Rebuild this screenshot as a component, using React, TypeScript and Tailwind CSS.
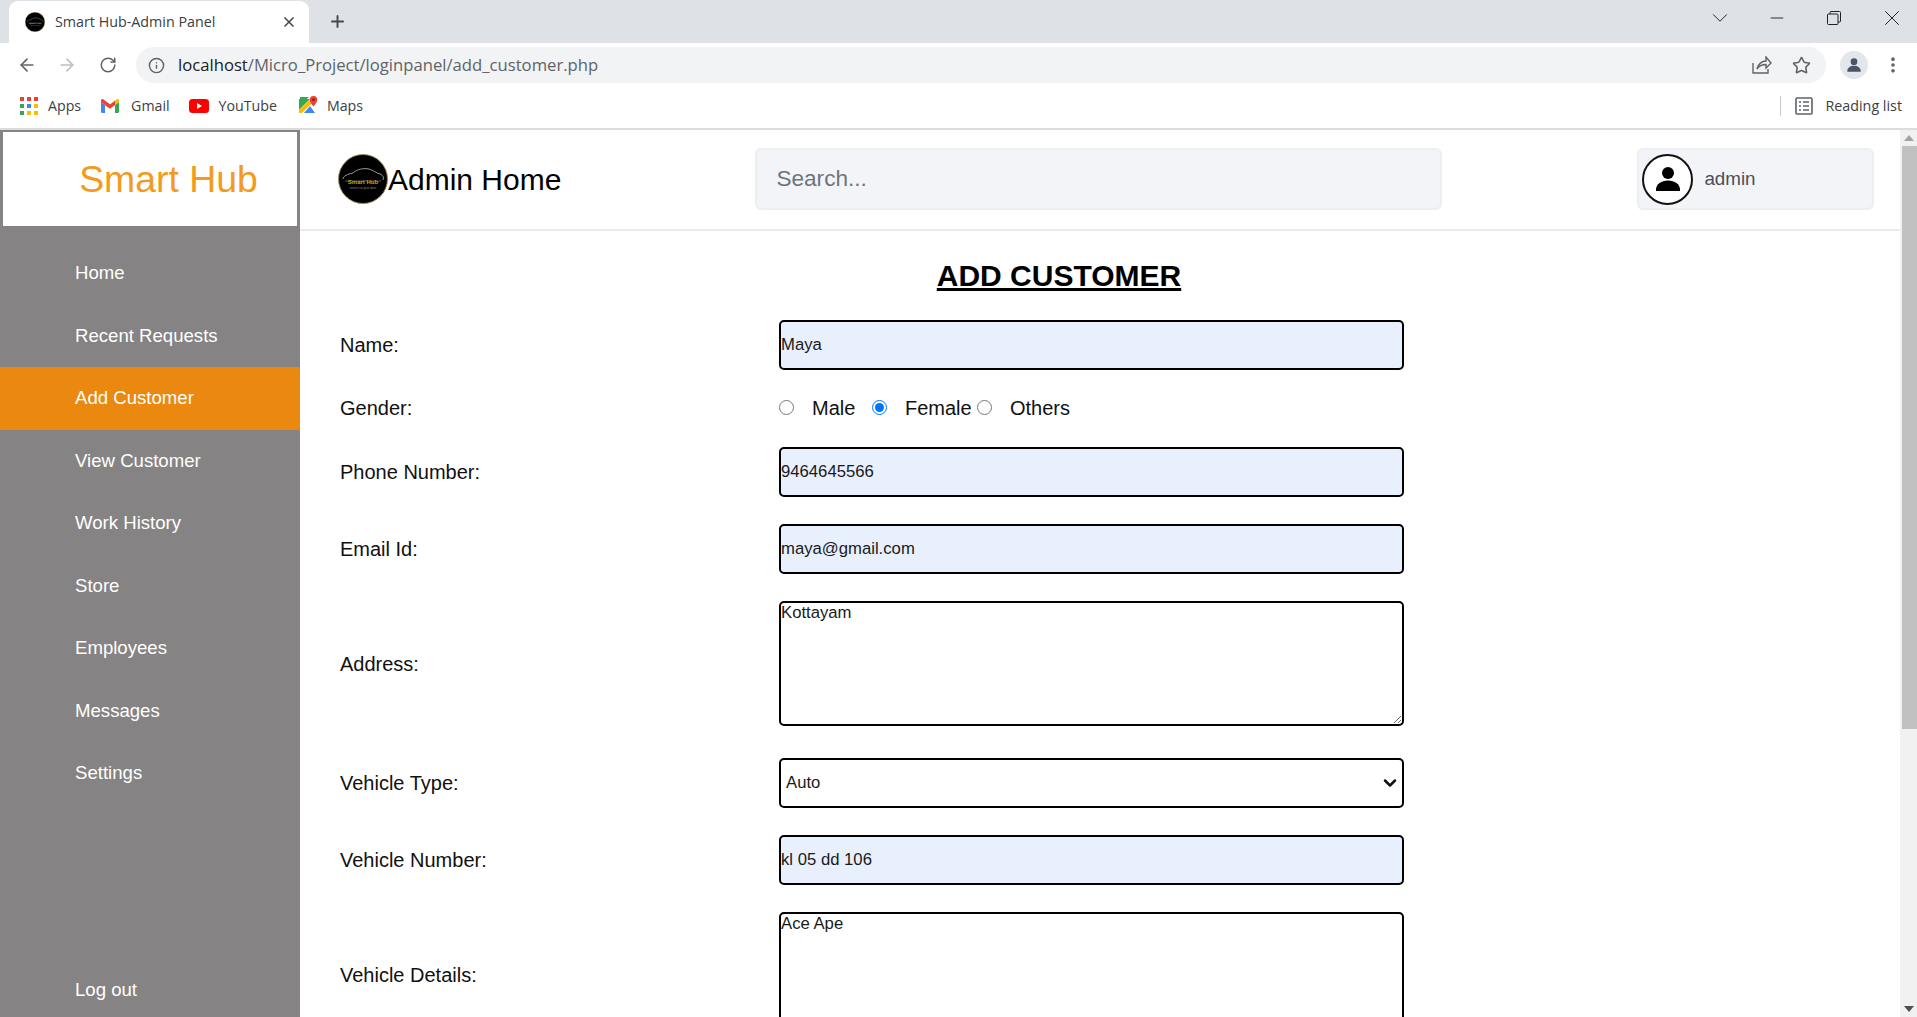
import React from "react";
import { ArrowLeft, ArrowRight, RotateCw, Info, Star, Plus, X, ChevronDown, Minus, EllipsisVertical } from "lucide-react";

const ui = "font-['Open_Sans','Noto_Sans',sans-serif]";
const page = "font-['Liberation_Sans',Arial,sans-serif]";

function Logo({ size }: { size: number }) {
  return (
    <svg width={size} height={size} viewBox="0 0 50 50" className="shrink-0">
      <circle cx="25" cy="25" r="24.500" fill="#000" stroke="#9b8b63" strokeWidth="1" />
      <path d="M5 25c0-3 5-5 10-6 4-4 11-5 16-4 4 1 7 4 11 5 3 1 4 3 3 6" fill="none" stroke="#9a9a9a" strokeWidth="1" />
      <path d="M7 27h36" stroke="#6f6f6f" strokeWidth="0.800" />
      <text x="25" y="30" textAnchor="middle" fontSize="6" fontWeight="700" fill="#c9a20c" fontFamily="Liberation Sans, sans-serif">Smart Hub</text>
      <text x="25" y="35" textAnchor="middle" fontSize="3" fill="#8a8a8a" fontFamily="Liberation Sans, sans-serif">service at your door</text>
    </svg>
  );
}

function Person({ className }: { className?: string }) {
  return (
    <svg viewBox="0 0 24 24" className={className} fill="currentColor">
      <circle cx="12" cy="8" r="4" />
      <path d="M4 20v-1c0-3.500 3.600-6 8-6s8 2.500 8 6v1z" />
    </svg>
  );
}

function AppsIcon() {
  const c = ["#ea4335", "#ea4335", "#ea4335", "#34a853", "#4285f4", "#fbbc04", "#34a853", "#fbbc04", "#fbbc04"];
  return (
    <div className="grid grid-cols-[4px_4px_4px] gap-[3px]">
      {c.map((x, i) => (
        <span key={i} className="size-[4px]" style={{ background: x }} />
      ))}
    </div>
  );
}

function GmailIcon() {
  return (
    <svg width="18" height="14" viewBox="0 0 18 14">
      <path d="M0 3v9.500A1.500 1.500 0 0 0 1.500 14H4V6z" fill="#4285f4" />
      <path d="M18 3v9.500a1.500 1.500 0 0 1-1.500 1.500H14V6z" fill="#34a853" />
      <path d="M4 6 0 3V1.500C0 .2 1.500-.4 2.500.4L9 5.500l-2 3z" fill="#ea4335" />
      <path d="M14 6l4-3V1.500C18 .2 16.500-.4 15.500.4L9 5.500V8.500z" fill="#fbbc04" />
      <path d="M4 1.800 9 5.500l5-3.700V6L9 9.800 4 6z" fill="#ea4335" />
    </svg>
  );
}

function YouTubeIcon() {
  return (
    <svg width="20" height="14" viewBox="0 0 20 14">
      <rect width="20" height="14" rx="3.500" fill="#f00" />
      <path d="M8 4l5 3-5 3z" fill="#fff" />
    </svg>
  );
}

function MapsIcon() {
  return (
    <svg width="19" height="19" viewBox="0 0 19 19">
      <path d="M0 3h11L0 14z" fill="#34a853" />
      <path d="M0 14 11 3l3 3L3 17H0z" fill="#fbbc04" />
      <path d="M5 17 11 10l5 7z" fill="#4285f4" />
      <path d="M1 1h9L1 9z" fill="#34a853" />
      <path d="M14.500 0a3.800 3.800 0 0 0-3.800 3.800c0 2.700 3.800 6.700 3.800 6.700s3.800-4 3.800-6.700A3.800 3.800 0 0 0 14.500 0z" fill="#ea4335" />
      <circle cx="14.500" cy="3.800" r="1.300" fill="#7d1f16" />
    </svg>
  );
}

function Bookmark({ icon, label, className }: { icon: React.ReactNode; label: string; className: string }) {
  return (
    <div className={`flex items-center ${className}`}>
      {icon}
      <span className="text-[14.200px] text-[#3c4043]">{label}</span>
    </div>
  );
}

function BrowserChrome() {
  return (
    <div className={`${ui} shrink-0`}>
      <div className="flex h-[43px] bg-[#dee1e6]">
        <div className="ml-[9px] mt-[1px] flex h-[42px] w-[300px] items-center rounded-t-[9px] bg-white pl-[16px] pr-[12px]">
          <Logo size={20} />
          <span className="ml-[10px] flex-1 text-[14.300px] text-[#3c4043]">Smart Hub-Admin Panel</span>
          <X size={16} strokeWidth={2.500} className="text-[#45484c]" />
        </div>
        <Plus size={19} strokeWidth={2.400} className="ml-[19px] mt-[12px] text-[#45484c]" />
        <div className="ml-auto flex items-center pb-[7px] text-[#202124]">
          <ChevronDown size={26} strokeWidth={0.900} />
          <Minus size={20} strokeWidth={1.100} className="ml-[34px]" />
          <svg width="14" height="14" viewBox="0 0 14 14" fill="none" stroke="#202124" className="ml-[40px]">
            <rect x="0.500" y="3" width="10.500" height="10.500" rx="1" />
            <path d="M3 3V1.500a1 1 0 0 1 1-1h8.500a1 1 0 0 1 1 1V10a1 1 0 0 1-1 1H11" />
          </svg>
          <X size={26} strokeWidth={0.900} className="ml-[38px] mr-[12px]" />
        </div>
      </div>
      <div className="flex h-[44px] items-center bg-white">
        <ArrowLeft size={20} strokeWidth={2} className="ml-[17px] text-[#5f6368]" />
        <ArrowRight size={20} strokeWidth={2} className="ml-[20px] text-[#bcbfc3]" />
        <RotateCw size={18} strokeWidth={2} className="ml-[22px] text-[#5f6368]" />
        <div className="ml-[19px] flex h-[36px] w-[1690px] items-center rounded-full bg-[#f1f3f4] pl-[12px]">
          <Info size={17} strokeWidth={2} className="text-[#5f6368]" />
          <span className="ml-[13px] text-[16.670px] leading-none text-[#5f6368]">
            <span className="text-[#202124]">localhost</span>/Micro_Project/loginpanel/add_customer.php
          </span>
          <svg width="20" height="18" viewBox="0 0 20 18" fill="none" stroke="#5f6368" strokeWidth="1.400" className="ml-auto">
            <path d="M1 7v10h15v-4M5 13c1-5 5-8 9-8V1l5 6-5 5V8.500c-4 0-7 1.500-9 4.500z" />
          </svg>
          <Star size={19} strokeWidth={2} className="ml-[20px] mr-[15px] text-[#5f6368]" />
        </div>
        <div className="ml-[14px] flex size-[28px] items-center justify-center rounded-full bg-[#e3e6eb] text-[#4a5568]">
          <Person className="size-[20px]" />
        </div>
        <EllipsisVertical size={20} strokeWidth={2.400} className="ml-[15px] text-[#5f6368]" />
      </div>
      <div className="flex h-[43px] items-center border-b-[2px] border-[#dadce0] bg-white pb-[3px]">
        <Bookmark className="ml-[20px] gap-[10px]" icon={<AppsIcon />} label="Apps" />
        <Bookmark className="ml-[20px] gap-[12px]" icon={<GmailIcon />} label="Gmail" />
        <Bookmark className="ml-[19px] gap-[10px]" icon={<YouTubeIcon />} label="YouTube" />
        <Bookmark className="ml-[22px] gap-[9px]" icon={<MapsIcon />} label="Maps" />
        <div className="ml-auto flex items-center">
          <div className="h-[20px] w-px bg-[#c4c7cb]" />
          <svg width="18" height="18" viewBox="0 0 18 18" fill="none" stroke="#5f6368" strokeWidth="1.600" className="ml-[14px]">
            <rect x="1" y="1" width="16" height="16" rx="1" />
            <path d="M4 5h2M8 5h6M4 9h2M8 9h6M4 13h2M8 13h6" />
          </svg>
          <span className="ml-[12px] mr-[15px] text-[14.300px] text-[#3c4043]">Reading list</span>
        </div>
      </div>
    </div>
  );
}

const menu = ["Home", "Recent Requests", "Add Customer", "View Customer", "Work History", "Store", "Employees", "Messages", "Settings"];

function Sidebar() {
  return (
    <aside className="flex h-[887px] w-[300px] shrink-0 flex-col bg-[#858383] px-0 pt-[2px] text-white">
      <div className="mx-[3px] flex h-[94px] items-center justify-center bg-white pl-[37px] text-[37.400px] text-[#f39a21]">
        Smart Hub
      </div>
      <nav className="pt-[16px]">
        {menu.map((m) => (
          <div
            key={m}
            className={`flex h-[62.500px] items-center pl-[75px] text-[18.600px] ${m === "Add Customer" ? "bg-[#ea880f]" : ""}`}
          >
            {m}
          </div>
        ))}
      </nav>
      <div className="mt-auto mb-[13px] pl-[75px] text-[18.600px]">Log out</div>
    </aside>
  );
}

function TopBar() {
  return (
    <header className="flex h-[101px] items-center border-b-[2px] border-[#e9ecef] pb-[1px] pl-[38px]">
      <Logo size={50} />
      <span className="text-[30px] text-black">Admin Home</span>
      <div className="ml-[194px] flex h-[62px] w-[687px] items-center rounded-[6px] border-[2px] border-[#eceef2] bg-[#f3f4f8] pl-[19px] text-[22.600px] text-[#6c757d]">
        Search...
      </div>
      <div className="ml-[195px] flex h-[62px] w-[237px] items-center rounded-[6px] border-[2px] border-[#eceef2] bg-[#f3f4f8] pl-[3px] text-[18.800px] text-[#495057]">
        <div className="flex size-[51px] items-center justify-center rounded-full border-[2px] border-[#111] bg-white text-black">
          <Person className="size-[36px]" />
        </div>
        <span className="ml-[11px]">admin</span>
      </div>
    </header>
  );
}

const field =
  "block w-[625px] rounded-[5px] border-[2.500px] border-black pl-[0px] text-[16.700px] text-[#1a1a1a] outline-none";

function Row({ label, children, className }: { label: string; children: React.ReactNode; className?: string }) {
  return (
    <div className={`grid grid-cols-[439px_625px] items-center ${className ?? ""}`}>
      <label className="text-[20px] text-[#111]">{label}</label>
      {children}
    </div>
  );
}

function Text({ value }: { value: string }) {
  return <input readOnly value={value} className={`${field} h-[50px] bg-[#e8f0fe]`} />;
}

function Area({ value, height }: { value: string; height: string }) {
  return <textarea readOnly value={value} className={`${field} ${height} bg-white leading-[19px] resize`} />;
}

function Radio({ label, checked, className }: { label: string; checked?: boolean; className: string }) {
  return (
    <label className={`flex items-center text-[20px] text-[#111] ${className}`}>
      <input type="radio" name="gender" readOnly checked={!!checked} className="m-0 size-[15px] -translate-y-[1px]" />
      <span className="ml-[18px]">{label}</span>
    </label>
  );
}

function Form() {
  return (
    <div className="pl-[40px]">
      <h1 className="pt-[27px] pr-[122px] text-center text-[30px] font-bold leading-[36px] text-black underline">ADD CUSTOMER</h1>
      <div className="mt-[26px] flex flex-col gap-[27px]">
        <Row label="Name:">
          <Text value="Maya" />
        </Row>
        <Row label="Gender:" className="-mt-[4px] mb-[5px] h-[22px]">
          <div className="flex items-center">
            <Radio label="Male" className="w-[93px]" />
            <Radio label="Female" checked className="w-[105px]" />
            <Radio label="Others" className="" />
          </div>
        </Row>
        <Row label="Phone Number:">
          <Text value="9464645566" />
        </Row>
        <Row label="Email Id:">
          <Text value="maya@gmail.com" />
        </Row>
        <Row label="Address:">
          <Area value="Kottayam" height="h-[125px]" />
        </Row>
        <Row label="Vehicle Type:" className="mt-[5px]">
          <div className="relative">
            <select className={`${field} h-[50px] appearance-none bg-white pl-[5px]`} defaultValue="Auto">
              <option>Auto</option>
            </select>
            <ChevronDown size={20} strokeWidth={3} className="pointer-events-none absolute right-[4px] top-[15px] text-[#111]" />
          </div>
        </Row>
        <Row label="Vehicle Number:">
          <Text value="kl 05 dd 106" />
        </Row>
        <Row label="Vehicle Details:">
          <Area value="Ace Ape" height="h-[125px]" />
        </Row>
      </div>
    </div>
  );
}

function Scrollbar() {
  return (
    <div className="flex w-[17px] shrink-0 flex-col items-center border-l border-[#f0f0f0] bg-[#f1f1f1]">
      <svg width="10" height="6" viewBox="0 0 10 6" className="mt-[5px] shrink-0">
        <path d="M5 0l5 6H0z" fill="#a3a3a3" />
      </svg>
      <div className="mt-[5px] h-[583px] w-[15px] bg-[#c1c1c1]" />
      <svg width="10" height="6" viewBox="0 0 10 6" className="mb-[5px] mt-auto shrink-0">
        <path d="M5 6l5-6H0z" fill="#505050" />
      </svg>
    </div>
  );
}

export default function App() {
  return (
    <div className="flex h-screen w-full flex-col overflow-hidden bg-white">
      <BrowserChrome />
      <div className={`${page} flex min-h-0 flex-1`}>
        <div className="flex min-w-0 flex-1 overflow-hidden">
          <Sidebar />
          <main className="min-w-0 flex-1">
            <TopBar />
            <Form />
          </main>
        </div>
        <Scrollbar />
      </div>
    </div>
  );
}
